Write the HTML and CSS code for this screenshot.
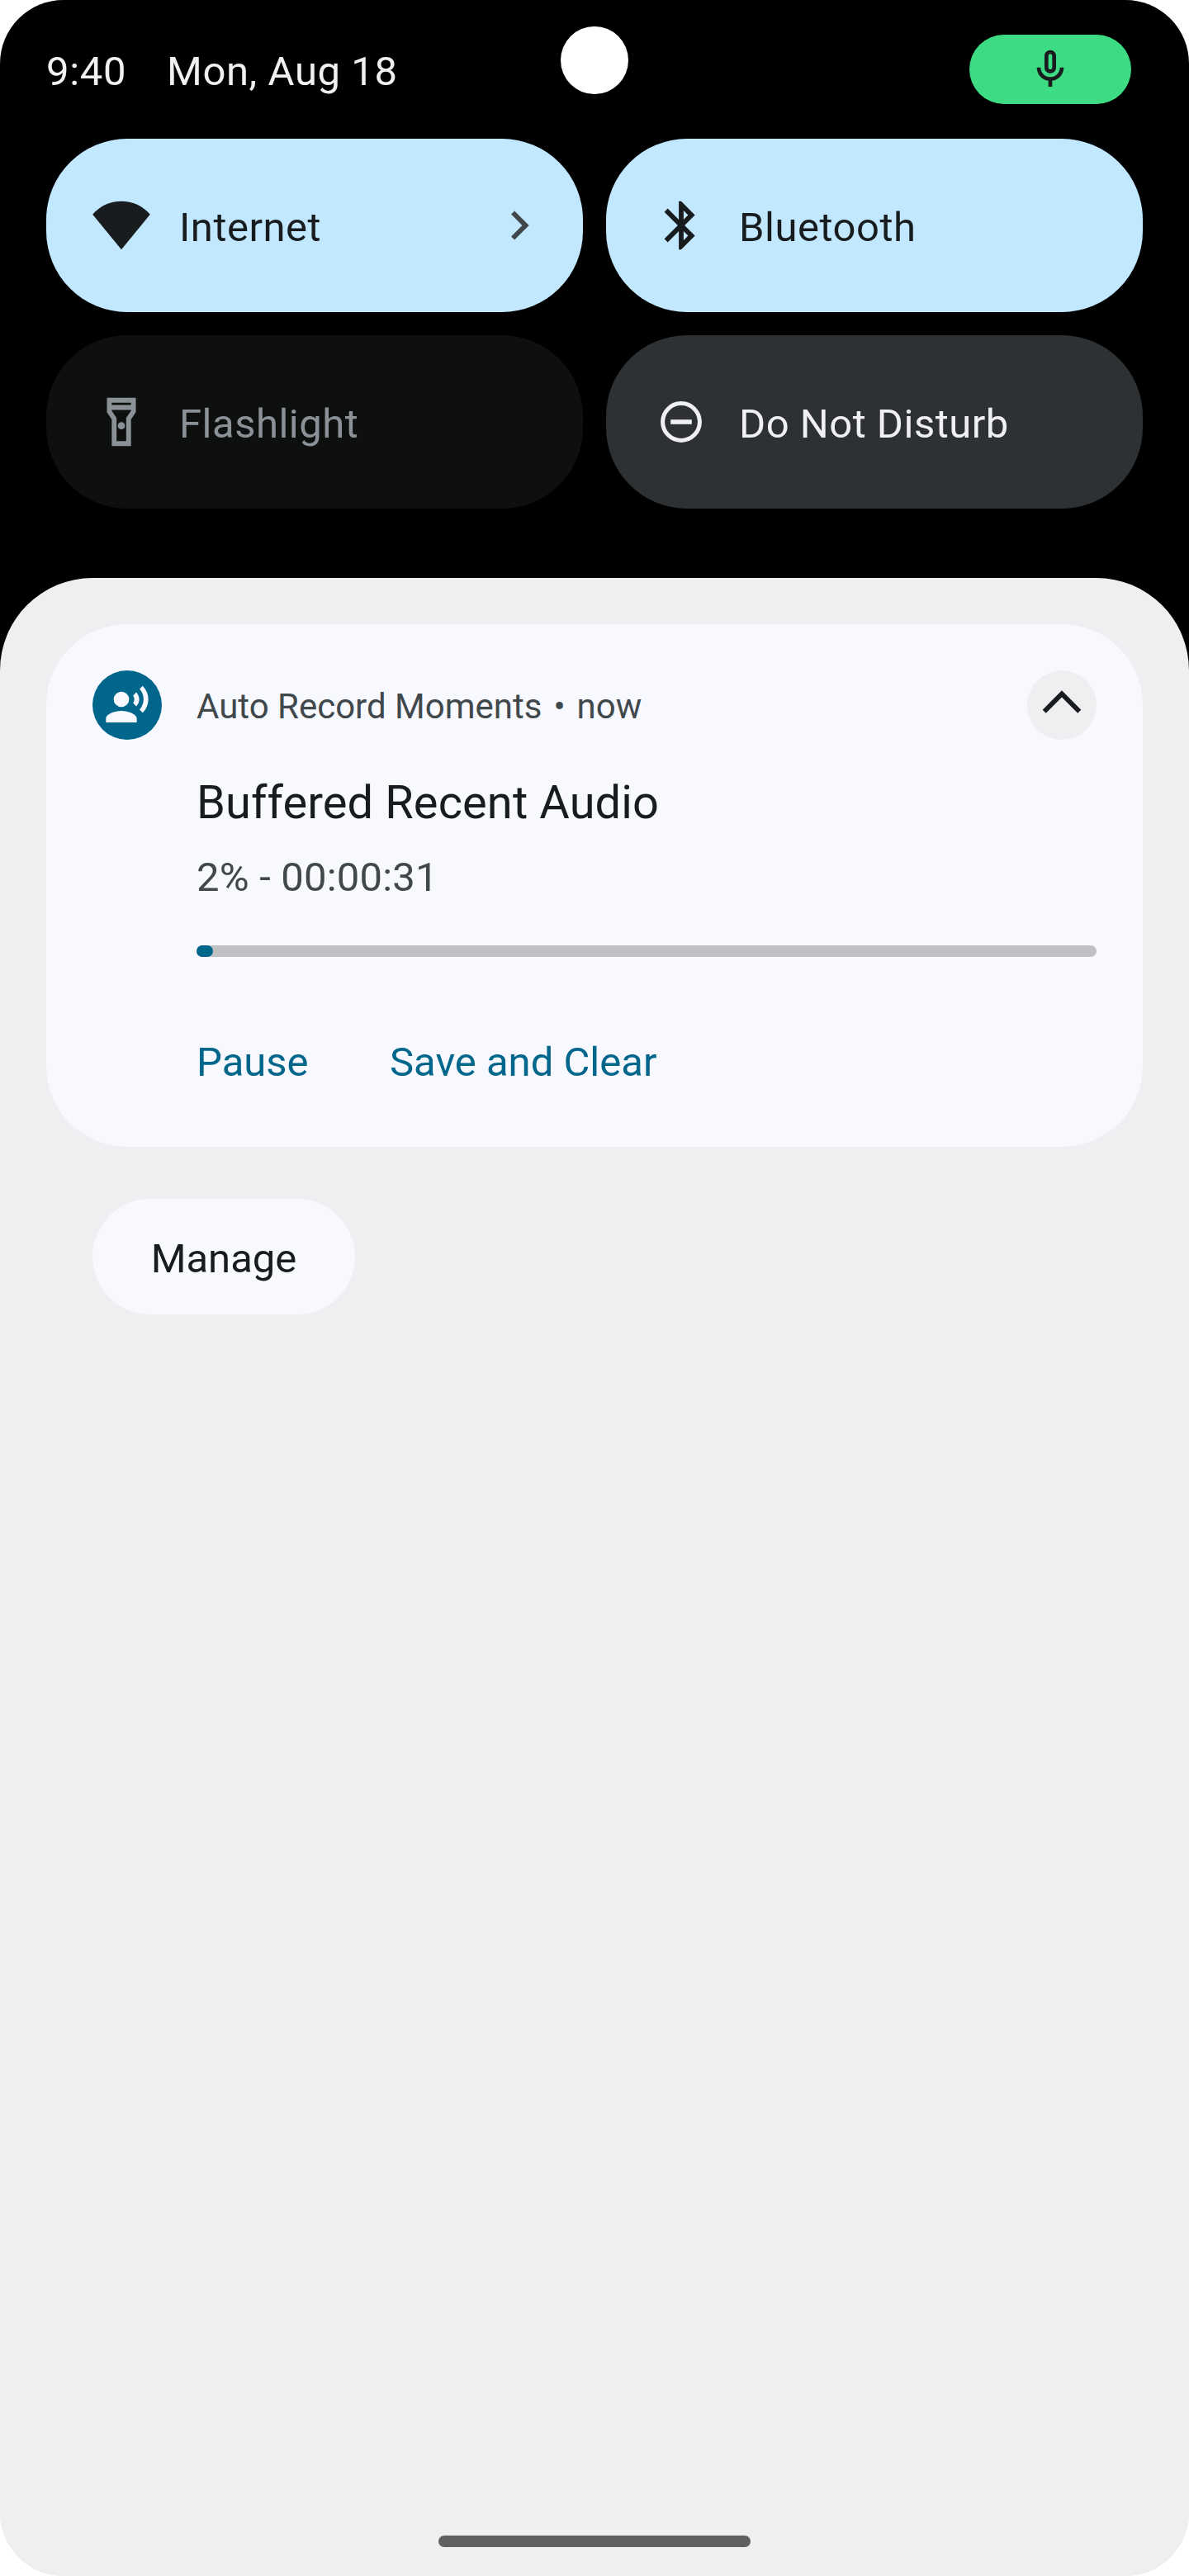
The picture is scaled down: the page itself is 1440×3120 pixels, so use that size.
FILE: index.html
```html
<!DOCTYPE html>
<html lang="en">
<head>
<meta charset="utf-8">
<title>Notification shade</title>
<link rel="stylesheet" href="styles.css">
</head>
<body>
<div class="screen">
  <header class="status">
    <span class="time">9:40</span>
    <span class="date">Mon, Aug 18</span>
    <span class="camera"></span>
    <span class="privacy">
      <svg width="56" height="56" viewBox="0 0 24 24" fill="currentColor"><path fill-rule="evenodd" d="M12 14c1.66 0 3-1.34 3-3V5c0-1.66-1.34-3-3-3S9 3.34 9 5v6c0 1.66 1.34 3 3 3zM11 5c0-.55.45-1 1-1s1 .45 1 1v6c0 .55-.45 1-1 1s-1-.45-1-1V5z"/><path d="M17 11c0 2.76-2.24 5-5 5s-5-2.24-5-5H5c0 3.53 2.61 6.43 6 6.92V21h2v-3.08c3.39-.49 6-3.39 6-6.92h-2z"/></svg>
    </span>
  </header>

  <section class="tiles">
    <div class="tile tile-on">
      <svg width="70" height="70" viewBox="0 0 70 70" fill="currentColor"><path d="M0.2 21.7A45.8 45.8 0 0 1 69.8 21.7L35 64.2z"/></svg>
      <span class="label">Internet</span>
      <svg class="chevron" width="70" height="70" viewBox="0 0 24 24" fill="currentColor"><path d="M10 6L8.59 7.41 13.17 12l-4.58 4.59L10 18l6-6z"/></svg>
    </div>
    <div class="tile tile-on">
      <svg width="70" height="70" viewBox="0 0 24 24" fill="currentColor"><path d="M17.71 7.71L12 2h-1v7.59L6.41 5 5 6.41 10.59 12 5 17.59 6.41 19 11 14.41V22h1l5.71-5.71-4.3-4.29 4.3-4.29zM13 5.83l1.88 1.88L13 9.59V5.83zm1.88 10.46L13 18.17v-3.76l1.88 1.88z"/></svg>
      <span class="label">Bluetooth</span>
    </div>
    <div class="tile tile-disabled">
      <svg width="70" height="70" viewBox="0 0 24 24" fill="currentColor"><path fill-rule="evenodd" d="M6 2v6l2 3v11h8V11l2-3V2H6zm10 2v1H8V4h8zm-2 6.4V20h-4v-9.6L8 7.4V7h8v.4l-2 3z"/><circle cx="12" cy="13.6" r="1.5"/></svg>
      <span class="label">Flashlight</span>
    </div>
    <div class="tile tile-off">
      <svg width="70" height="70" viewBox="0 0 70 70"><circle cx="35" cy="35" r="22.4" fill="none" stroke="currentColor" stroke-width="5"/><rect x="22.2" y="32.2" width="25.6" height="5.6" fill="currentColor"/></svg>
      <span class="label">Do Not Disturb</span>
    </div>
  </section>

  <main class="sheet">
    <article class="card">
      <span class="app-icon">
        <svg width="56" height="56" viewBox="0 0 24 24" fill="currentColor"><circle cx="9" cy="9" r="4"/><path d="M9 15c-2.67 0-8 1.34-8 4v2h16v-2c0-2.66-5.33-4-8-4zm7.76-9.64l-1.68 1.69c.84 1.18.84 2.71 0 3.89l1.68 1.69c2.02-2.02 2.02-5.07 0-7.27zM20.07 2l-1.63 1.63c2.77 3.02 2.77 7.56 0 10.74L20.07 16c3.9-3.89 3.91-9.95 0-14z"/></svg>
      </span>
      <div class="content">
        <div class="meta">
          <span class="meta-text">Auto Record Moments</span><span class="meta-text dot">•</span><span class="meta-text">now</span>
          <span class="collapse">
            <svg width="84" height="84" viewBox="0 0 84 84" fill="currentColor"><path d="M42 24.3L18.7 47.7l4.1 4.1L42 32.5l19.2 19.3 4.1-4.1z"/></svg>
          </span>
        </div>
        <h1 class="title">Buffered Recent Audio</h1>
        <p class="body">2% - 00:00:31</p>
        <div class="track"><div class="fill"></div></div>
        <div class="actions">
          <span class="pause">Pause</span>
          <span class="save">Save and Clear</span>
        </div>
      </div>
    </article>
    <div class="manage"><span>Manage</span></div>
    <div class="handle"></div>
  </main>
</div>
</body>
</html>
```

FILE: styles.css
```css
* { box-sizing: border-box; }

body {
  margin: 0;
  background: #fff;
  font-family: Roboto, "Liberation Sans", sans-serif;
  font-size: 49px;
  font-weight: 400;
  line-height: 60px;
}

svg { display: block; flex: none; }

.screen {
  display: flex;
  flex-direction: column;
  width: 1440px;
  height: 3120px;
  overflow: hidden;
  border-radius: 77px;
  background: linear-gradient(#000 900px, #efeff1 900px);
}

/* status bar */
.status {
  position: relative;
  display: flex;
  align-items: center;
  height: 168px;
  padding: 0 70px 0 56px;
  color: #f0f0f3;
  white-space: nowrap;
}
.time { width: 146px; letter-spacing: 0.7px; padding-top: 5px; }
.date { letter-spacing: 0.6px; padding-top: 5px; }
.camera {
  position: absolute;
  left: 679px;
  top: 32px;
  width: 82px;
  height: 82px;
  border-radius: 50%;
  background: #fff;
}
.privacy {
  display: flex;
  align-items: center;
  justify-content: center;
  width: 196px;
  height: 84px;
  margin-left: auto;
  border-radius: 42px;
  background: #3ddc84;
  color: #191c1e;
}

/* quick settings */
.tiles {
  display: grid;
  grid-template-columns: 1fr 1fr;
  gap: 28px;
  padding: 0 56px 84px;
}
.tile {
  display: flex;
  align-items: center;
  gap: 35px;
  height: 210px;
  padding: 0 42px 0 56px;
  border-radius: 98px;
}
.label { padding-top: 5px; letter-spacing: 0.5px; white-space: nowrap; }
.chevron { margin-left: auto; color: #40484d; }
.tile-on { background: #c2e8ff; color: #191c1e; }
.tile-off { background: #2e3133; color: #f0f0f3; }
.tile-disabled { background: #0e1010; color: #8a9297; }

/* notifications */
.sheet {
  flex: 1;
  display: flex;
  flex-direction: column;
  align-items: flex-start;
  padding: 56px 56px 35px;
  border-radius: 112px 112px 0 0;
  background: #efeff1;
}
.card {
  display: flex;
  gap: 42px;
  width: 1328px;
  height: 633px;
  padding: 56px;
  border-radius: 98px;
  background: #f8f9fe;
  white-space: nowrap;
}
.app-icon {
  display: flex;
  align-items: center;
  justify-content: center;
  flex: none;
  width: 84px;
  height: 84px;
  border-radius: 50%;
  background: #00668c;
  color: #f8f9fe;
}
.content { flex: 1; }
.meta {
  display: flex;
  align-items: center;
  height: 84px;
  font-size: 42px;
  color: #40484c;
}
.meta-text { padding-top: 4px; }
.dot { margin: 0 14px; }
.collapse {
  margin-left: auto;
  border-radius: 50%;
  background: #efeff1;
  color: #191c1e;
}
.title {
  margin: 41px 0 0;
  font-size: 56px;
  font-weight: 400;
  line-height: 70px;
  letter-spacing: 0.1px;
  color: #191c1e;
}
.body { margin: 26px 0 0; letter-spacing: 0.2px; color: #40484c; }
.track {
  height: 14px;
  margin-top: 52px;
  border-radius: 7px;
  background: #c0c0c3;
}
.fill { width: 20px; height: 14px; border-radius: 7px; background: #00668c; }
.actions {
  display: flex;
  margin-top: 98px;
  color: #00668c;
}
.pause { width: 234px; }

.manage {
  display: flex;
  align-items: center;
  justify-content: center;
  width: 318px;
  height: 140px;
  margin: 63px 0 0 56px;
  padding-top: 5px;
  border-radius: 70px;
  background: #f8f9fe;
  color: #191c1e;
}
.handle {
  align-self: center;
  width: 378px;
  height: 14px;
  margin-top: auto;
  border-radius: 7px;
  background: #606060;
}
```
